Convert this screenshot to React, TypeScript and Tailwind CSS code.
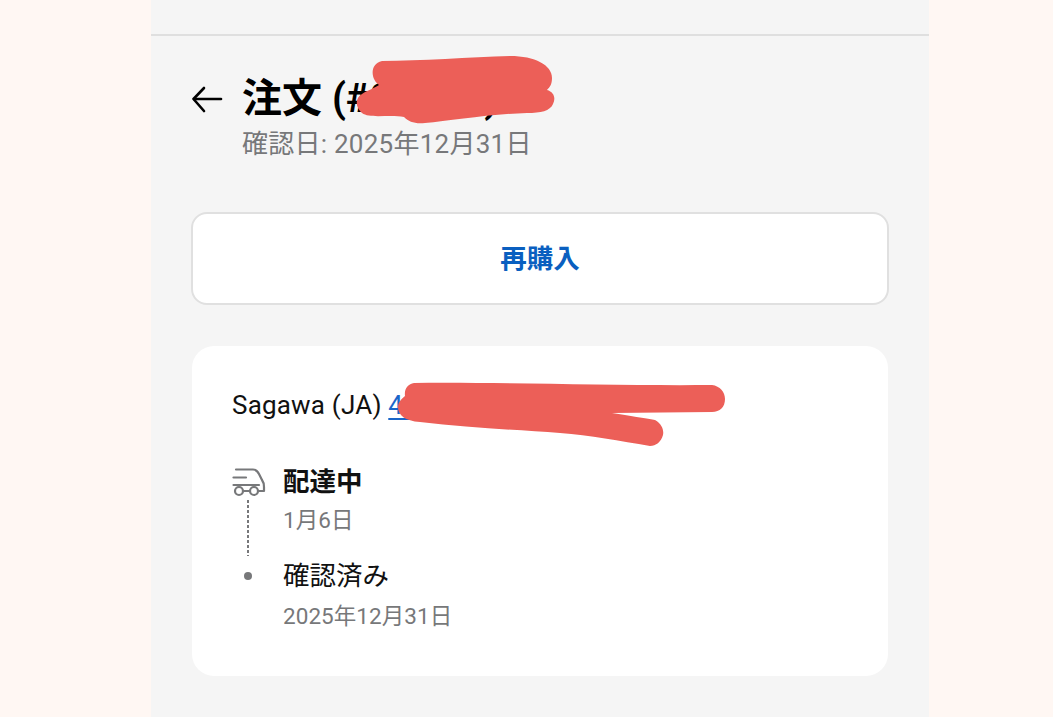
import React from "react";

const FONT = "font-['Roboto','Noto_Sans_CJK_JP',sans-serif]";

// red marker strokes over the order number and tracking number, in page coordinates
const Scribbles = () => (
    <svg className="absolute left-0 top-0" width="1053" height="717" viewBox="0 0 1053 717" fill="#ec5f58">
        <path d="M382 61C420 61 470 57 510 56C535 56 552 65 552 78C552 84 550 87 547 90C554 92 556 98 553 104C550 111 541 113 527 113C490 114 450 121 425 123C415 124 409 122 404 117C390 114 370 119 362 113C355 107 355 98 362 94C368 90 375 88 379 85C371 80 369 64 382 61Z" />
        <path d="M414 383C500 382 620 386 712 385C720 386 725 392 725 399C725 407 720 412 712 412L612 413C630 416 645 418 655 420C662 424 664 430 663 435C661 442 656 446 650 446C620 441 590 435 560 433C520 430 470 428 420 422C405 421 398 415 398 407C398 403 401 399 405 396C404 389 408 384 414 383Z" />
    </svg>
);

const TruckIcon = () => (
    <svg width="34" height="30" viewBox="0 0 34 30" fill="none" stroke="#77787a" strokeWidth="2.200" strokeLinecap="round" strokeLinejoin="round">
        <path d="M4 1.500H21C24 1.500 25.500 3 27 6L30 12C31.500 14 32 16 32 19V23H26" />
        <path d="M1.500 9.500H14" />
        <path d="M1.500 17H27" />
        <path d="M11 23H18" />
        <circle cx="7" cy="23" r="4" />
        <circle cx="22" cy="23" r="4" />
    </svg>
);

export default function App() {
    return (
        <div className={`${FONT} relative h-[717px] w-full overflow-hidden bg-[#fff7f3]`}>
            <div className="ml-[151px] h-full w-[778px] bg-[#f5f5f5]">
                {/* top divider */}
                <div className="h-[36px] border-b-2 border-[#dfdfdf]" />

                {/* header */}
                <div className="flex items-start gap-[19px] pl-[40px] pt-[38px]">
                    <svg className="mt-[11px]" width="32" height="30" viewBox="0 0 32 30" fill="none" stroke="#000" strokeWidth="2.600" strokeLinecap="round" strokeLinejoin="round">
                        <path d="M30 14H3" />
                        <path d="M13 3L2.500 14 13 26" />
                    </svg>
                    <div>
                        <div className="h-[50px] text-[40px] font-bold leading-[50px] text-black">注文 (#00000)</div>
                        <div className="mt-[2px] text-[26px] tracking-[0.25px] leading-[36px] text-[#77787a]">確認日: 2025年12月31日</div>
                    </div>
                </div>

                {/* buy again */}
                <div className="mx-[40px] mt-[50px] flex h-[93px] items-center justify-center rounded-[16px] border-2 border-[#e0e0e0] bg-white">
                    <span className="text-[26.500px] font-bold text-[#0a5fc0]">再購入</span>
                </div>

                {/* tracking card */}
                <div className="mx-[41px] mt-[41px] h-[330px] rounded-[22px] bg-white px-[40px] pt-[41px]">
                    <div className="flex h-[36px] items-center text-[26px] tracking-[0.2px] leading-[36px] text-[#111]">
                        <span>Sagawa (JA)&nbsp;</span>
                        <span className="text-[#1a66c9] underline underline-offset-4">4000000000</span>
                    </div>

                    <div className="mt-[41px] flex">
                        {/* timeline rail */}
                        <div className="flex w-[51px] flex-col pt-[4px]">
                            <TruckIcon />
                            <div className="ml-[15px] mt-[2px] h-[56px] w-[2px] bg-[repeating-linear-gradient(to_bottom,#77787a_0,#77787a_3px,transparent_3px,transparent_5px)]" />
                            <div className="ml-[12px] mt-[16px] size-[8px] rounded-full bg-[#77787a]" />
                        </div>
                        <div>
                            <div className="text-[26.500px] font-bold leading-[36px] text-[#111]">配達中</div>
                            <div className="mt-[2px] text-[22.500px] tracking-[0.05px] leading-[36px] text-[#77787a]">1月6日</div>
                            <div className="mt-[20px] text-[26.500px] leading-[36px] text-[#111]">確認済み</div>
                            <div className="mt-[4px] text-[22.500px] tracking-[0.05px] leading-[36px] text-[#77787a]">2025年12月31日</div>
                        </div>
                    </div>
                </div>
            </div>
            <Scribbles />
        </div>
    );
}
